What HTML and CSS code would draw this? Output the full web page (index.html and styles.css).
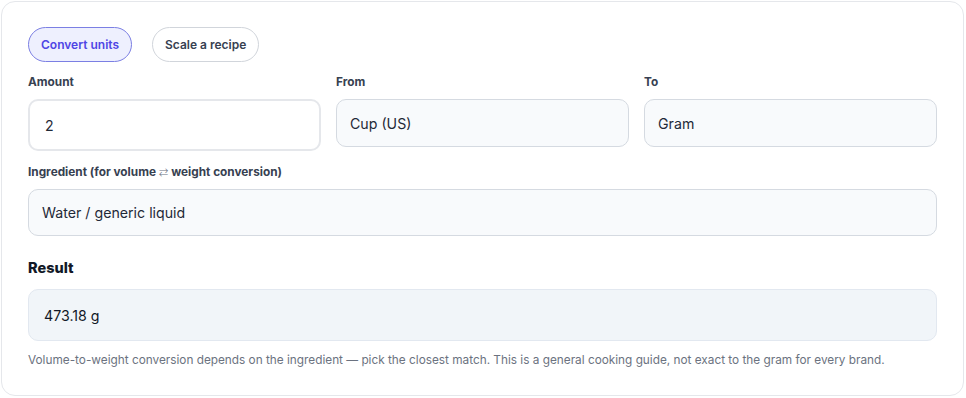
FILE: index.html
```
<!DOCTYPE html>
<html>
<head>
<meta charset="utf-8">
<link rel="stylesheet" href="styles.css">
</head>
<body>
<div class="card">
  <div class="tabs">
    <button class="tab active">Convert units</button>
    <button class="tab">Scale a recipe</button>
  </div>
  <div class="grid">
    <div class="field">
      <div class="label">Amount</div>
      <div class="input amount">2</div>
    </div>
    <div class="field">
      <div class="label">From</div>
      <div class="input select">Cup (US)</div>
    </div>
    <div class="field">
      <div class="label">To</div>
      <div class="input select">Gram</div>
    </div>
  </div>
  <div class="field ingredient">
    <div class="label">Ingredient (for volume <span class="arrows">⇄</span> weight conversion)</div>
    <div class="input select">Water / generic liquid</div>
  </div>
  <div class="result-title">Result</div>
  <div class="result">473.18 g</div>
  <p class="note">Volume-to-weight conversion depends on the ingredient — pick the closest match. This is a general cooking guide, not exact to the gram for every brand.</p>
</div>
</body>
</html>
```
FILE: styles.css
```
* { box-sizing: border-box; }
html, body { margin: 0; padding: 0; background: #ffffff; }
body { font-family: "Inter", "Liberation Sans", sans-serif; color: #1f2937; }
.card {
  margin: 1px 2px 2px 1px;
  height: 395px;
  border: 1px solid #e5e7eb;
  border-radius: 14px;
  padding: 25px 26px 20px 26px;
  background: #fff;
}
.tabs { display: flex; gap: 20px; margin-bottom: 12px; }
.tab {
  height: 35px;
  padding: 0 12px;
  border-radius: 18px;
  border: 1px solid #d1d5db;
  background: #fff;
  color: #374151;
  font-family: inherit;
  font-size: 12px;
  font-weight: 600;
}
.tab.active { background: #eef0fe; border-color: #7b7fe3; color: #4f46e5; }
.grid { display: grid; grid-template-columns: 1fr 1fr 1fr; gap: 15px; align-items: start; }
.label { font-size: 11.8px; font-weight: 700; color: #374151; line-height: 16px; margin-bottom: 9px; }
.arrows { font-weight: 300; color: #6b7280; font-family: "DejaVu Sans", sans-serif; font-size: 11.5px; line-height: 0; }
.input {
  height: 48px;
  border: 1px solid #d5dae1;
  border-radius: 10px;
  background: #f8fafc;
  display: flex;
  align-items: center;
  padding: 0 13px;
  font-size: 14.2px;
  color: #1f2937;
}
.input.amount { height: 52px; background: #fff; border: 2px solid #e5e7eb; padding-left: 15px; }
.ingredient { margin-top: 13px; }
.ingredient .input { height: 47px; }
.result-title { margin-top: 23px; font-size: 14.5px; font-weight: 800; color: #111827; line-height: 18px; margin-bottom: 12px; }
.result {
  height: 52px;
  border: 1px solid #e2e8f0;
  border-radius: 10px;
  background: #f1f5f9;
  display: flex;
  align-items: center;
  padding: 0 15px;
  font-size: 14.2px;
  color: #111827;
}
.note { margin: 11px 0 0; font-size: 11.8px; line-height: 16px; color: #6b7280; }
```
